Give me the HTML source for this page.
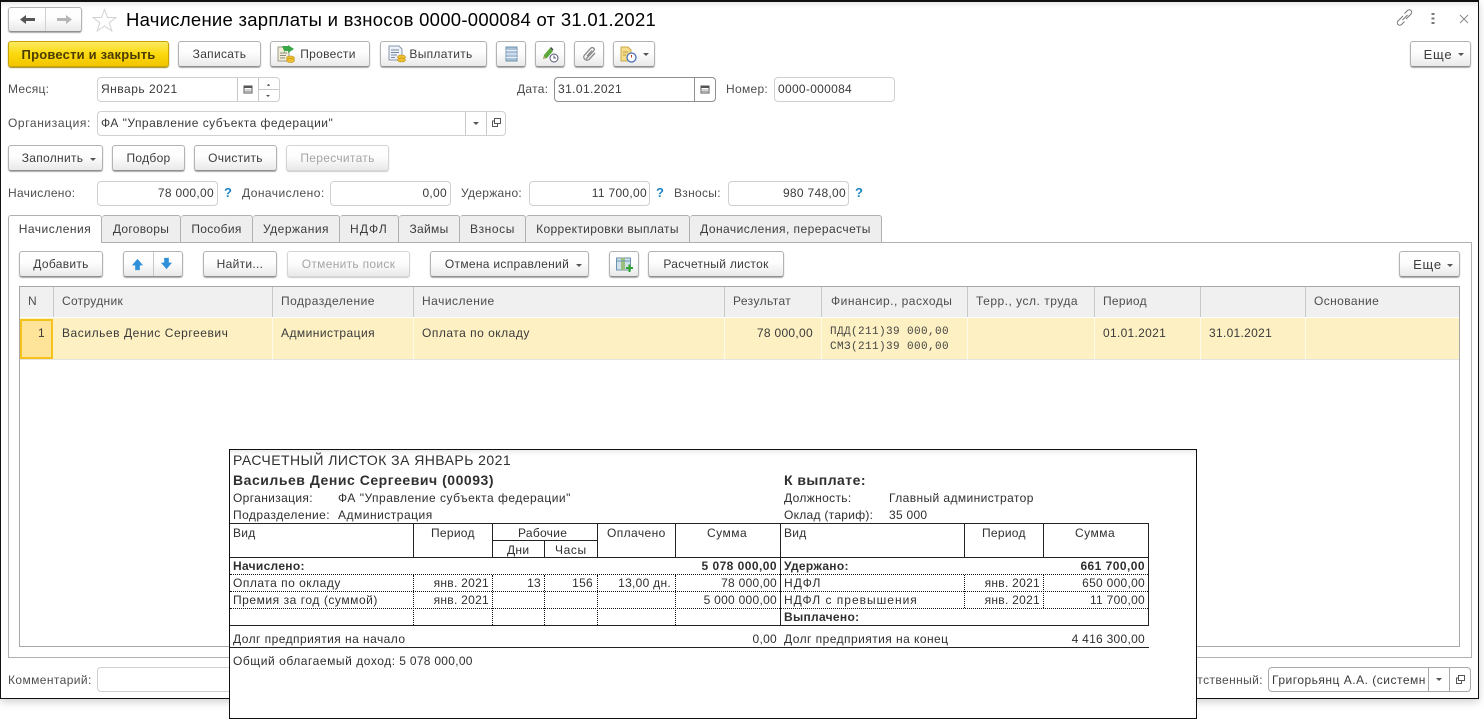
<!DOCTYPE html>
<html lang="ru"><head><meta charset="utf-8"><title>Начисление зарплаты</title>
<style>
html,body{margin:0;padding:0;background:#fff;width:1484px;height:719px;overflow:hidden}
body{position:relative;font-family:"Liberation Sans",Arial,sans-serif;font-size:12px;color:#3a3a3a}
div,svg{position:absolute;box-sizing:border-box}
.t{white-space:nowrap;line-height:16px;height:16px;letter-spacing:.3px}
.cy{letter-spacing:.5px}
.l{color:#4d4d4d}
.b{height:26px;border:1px solid #b3b3b3;border-bottom-color:#8f8f8f;border-radius:3px;background:linear-gradient(#fff,#fdfdfd 45%,#e9e9e9);box-shadow:0 1px 1px #aaa;display:flex;align-items:center;justify-content:center;white-space:nowrap;letter-spacing:.3px;color:#3c3c3c}
.b.d{color:#a5a5a5;border-color:#d5d5d5;box-shadow:0 1px 1px #ccc}
.f{height:25px;border:1px solid #d0d0d0;border-radius:4px;background:#fff}
.v{width:1px;background:#b5b5b5}
.tab{top:215px;height:27px;border:1px solid #b0b0b0;border-bottom:0;border-left:0;background:#eee;border-radius:3px 3px 0 0;text-align:center;line-height:26px;letter-spacing:.3px;color:#3c3c3c;white-space:nowrap}
.c{width:1px;top:287px;height:30px;background:#c8c8c8}
.y{width:1px;top:318px;height:41px;background:#fffbe9}
.h{color:#4d4d4d}
.m{font-family:"Liberation Mono",monospace;font-size:11px;letter-spacing:.4px;line-height:14px;height:14px;white-space:nowrap;color:#444}
.r .t{letter-spacing:.28px;color:#2f2f2f}
.r .t.cy{letter-spacing:.5px}
.r .bd{font-weight:bold;letter-spacing:.3px}
.ln{background:#222}
.dh{height:0;border-top:1px dotted #111}
.dv{width:0;border-left:1px dotted #111}
.ca{border-left:3px solid transparent;border-right:3px solid transparent;border-top:3px solid #555;width:0;height:0}
.eq{font-size:13px;letter-spacing:.8px}
</style></head><body>

<!-- window -->
<div style="left:0;top:0;width:1479px;height:699px;border:1px solid #111;border-width:2px 1px 1px 1px;background:#fff;box-shadow:0 3px 8px rgba(0,0,0,.18)"></div>
<div style="left:1px;top:2px;width:1477px;height:6px;background:linear-gradient(#ececec,#fff)"></div>

<!-- nav -->
<div class="b" style="left:8px;top:7px;width:74px;height:25px"></div>
<div class="v" style="left:45px;top:8px;height:23px;background:#d0d0d0"></div>
<svg style="left:20px;top:14px" width="16" height="11" viewBox="0 0 16 11"><path d="M0 5.500L6 1v3h9v3H6v3z" fill="#555"/></svg>
<svg style="left:56px;top:14px" width="16" height="11" viewBox="0 0 16 11"><path d="M16 5.500L10 1v3H1v3h9v3z" fill="#b5b5b5"/></svg>
<svg style="left:92px;top:8px" width="25" height="24" viewBox="0 0 25 24"><path d="M12.500 1.500l3 8h8.500l-6.800 5.200 2.600 8.300-7.300-5-7.300 5 2.600-8.300L1 9.500h8.500z" fill="#fff" stroke="#d2d2d2"/></svg>
<div class="t" style="left:126px;top:9px;font-size:18.5px;line-height:22px;height:22px;color:#000;letter-spacing:.27px">Начисление зарплаты и взносов 0000-000084 от 31.01.2021</div>

<svg style="left:1395px;top:9px" width="20" height="18" viewBox="0 0 20 18"><path d="M8 7l-5 5a2.400 2.400 0 0 0 3.500 3.500l3-3M11 10l5-5a2.400 2.400 0 0 0-3.500-3.500l-3 3M7.500 11l5-5" fill="none" stroke="#777"/></svg>
<svg style="left:1431px;top:12px" width="4" height="13" viewBox="0 0 4 13"><path d="M.5 1h3v2h-3zM.5 5.500h3v2h-3zM.5 10h3v2h-3z" fill="#777"/></svg>
<svg style="left:1459px;top:14px" width="11" height="10" viewBox="0 0 11 10"><path d="M1 1l8 8M9 1l-8 8" stroke="#888" fill="none"/></svg>

<!-- toolbar -->
<div class="b" style="left:8px;top:41px;width:161px;background:linear-gradient(#fdea63,#fbd90c 50%,#f2c500);border-color:#c7a400;color:#4b3d00;font-weight:bold;font-size:13px;letter-spacing:.2px;box-shadow:0 1px 1px #a08a20">Провести и закрыть</div>
<div class="b" style="left:178px;top:41px;width:83px">Записать</div>
<div class="b" style="left:270px;top:41px;width:100px;padding-left:16px">Провести</div>
<svg style="left:277px;top:45px" width="19" height="18" viewBox="0 0 19 18"><path d="M1 2h11v14H1z" fill="#f1edd8" stroke="#9a9a8a"/><path d="M3 8h7M3 10.500h6M3 13h5" stroke="#8a8a7a"/><path d="M5 1h6V0l6 4-6 4V6H8v2z" fill="#3aa84a"/><ellipse cx="13.500" cy="13" rx="4" ry="2" fill="#eec030" stroke="#b88a10" stroke-width=".6"/><ellipse cx="13.500" cy="15.500" rx="4" ry="2" fill="#eec030" stroke="#b88a10" stroke-width=".6"/></svg>
<div class="b" style="left:380px;top:41px;width:107px;padding-left:15px">Выплатить</div>
<svg style="left:388px;top:45px" width="19" height="18" viewBox="0 0 19 18"><path d="M1 1h10l3 3v11H1z" fill="#eef2fa" stroke="#8a98b0"/><path d="M3 5h8M3 7.500h8M3 10h6M3 12.500h4" stroke="#7a88a0"/><ellipse cx="13.500" cy="12" rx="4" ry="2" fill="#eec030" stroke="#b88a10" stroke-width=".6"/><ellipse cx="13.500" cy="15" rx="4" ry="2" fill="#eec030" stroke="#b88a10" stroke-width=".6"/></svg>
<div class="b" style="left:496px;top:41px;width:30px"></div>
<svg style="left:505px;top:46px" width="13" height="16" viewBox="0 0 13 16"><path d="M1 1h11v14H1z" fill="#a9c2d8" stroke="#6f93ad"/><path d="M1 4.500h11M1 8h11M1 11.500h11" stroke="#eef"/></svg>
<div class="b" style="left:535px;top:41px;width:30px"></div>
<svg style="left:542px;top:46px" width="17" height="17" viewBox="0 0 17 17"><path d="M1 13l1-4 6-7 3 3-6 7z" fill="#5aa83a"/><path d="M1 13l1-3 2 2z" fill="#c9a06a"/><path d="M8 2l1-1 2.500 2.500-1 1z" fill="#444"/><circle cx="12" cy="12" r="4" fill="#fff" stroke="#557"/><path d="M12 9.500V12h2" stroke="#557" fill="none"/></svg>
<div class="b" style="left:574px;top:41px;width:30px"></div>
<svg style="left:582px;top:46px" width="15" height="16" viewBox="0 0 15 16"><path d="M4 13L12 4.500a2 2 0 0 0-3-2.500L2.500 9a3.200 3.200 0 0 0 4.500 4.500L13 7M5 10l5-5.500" fill="none" stroke="#888" stroke-width="1.300"/></svg>
<div class="b" style="left:613px;top:41px;width:42px"></div>
<svg style="left:620px;top:46px" width="17" height="17" viewBox="0 0 17 17"><path d="M1 1h7l3 3v11H1z" fill="#f5dc8a" stroke="#c9a94a"/><path d="M3 6h5M3 9h3" stroke="#b99a3a"/><circle cx="11.500" cy="11.500" r="4.500" fill="#fff" stroke="#4a6fb5" stroke-width="1.300"/><path d="M11.500 9v2.500" stroke="#c33"/></svg>
<div class="ca" style="left:643px;top:53px"></div>
<div class="b eq" style="left:1410px;top:41px;width:61px;padding-right:5px">Еще</div>
<div class="ca" style="left:1458px;top:53px"></div>

<!-- fields row 1 -->
<div class="t l" style="left:8px;top:81px">Месяц:</div>
<div class="f" style="left:97px;top:77px;width:183px"></div>
<div class="v" style="left:237px;top:78px;height:23px;background:#c8c8c8"></div>
<div class="v" style="left:258px;top:78px;height:23px;background:#c8c8c8"></div>
<div style="left:259px;top:89px;width:20px;height:1px;background:#c8c8c8"></div>
<div class="t" style="left:101px;top:81px;letter-spacing:.5px">Январь 2021</div>
<svg style="left:243px;top:84px" width="10" height="10" viewBox="0 0 10 10"><path d="M1 2h8v7H1z" fill="#fff" stroke="#555"/><path d="M1 1.500h8V4H1z" fill="#555"/><path d="M2.500 5.500h1v1h-1zM4.500 5.500h1v1h-1zM6.500 5.500h1v1h-1zM2.500 7h1v1h-1zM4.500 7h1v1h-1zM6.500 7h1v1h-1z" fill="#555"/></svg>
<div style="left:267px;top:84px;width:3px;height:2px;border-bottom:2px solid #666;border-left:1px solid transparent;border-right:1px solid transparent"></div>
<div class="ca" style="left:266px;top:95px;border-left-width:2px;border-right-width:2px;border-top-width:2px"></div>

<div class="t l" style="left:517px;top:81px">Дата:</div>
<div class="f" style="left:554px;top:77px;width:162px;border-color:#8f8f8f"></div>
<div class="v" style="left:694px;top:78px;height:23px;background:#8f8f8f"></div>
<div class="t" style="left:558px;top:81px;letter-spacing:.4px">31.01.2021</div>
<svg style="left:700px;top:84px" width="10" height="10" viewBox="0 0 10 10"><path d="M1 2h8v7H1z" fill="#fff" stroke="#555"/><path d="M1 1.500h8V4H1z" fill="#555"/><path d="M2.500 5.500h1v1h-1zM4.500 5.500h1v1h-1zM6.500 5.500h1v1h-1zM2.500 7h1v1h-1zM4.500 7h1v1h-1zM6.500 7h1v1h-1z" fill="#555"/></svg>
<div class="t l" style="left:726px;top:81px">Номер:</div>
<div class="f" style="left:774px;top:77px;width:121px"></div>
<div class="t" style="left:778px;top:81px">0000-000084</div>

<!-- org -->
<div class="t l" style="left:8px;top:115px;letter-spacing:.6px">Организация:</div>
<div class="f" style="left:97px;top:111px;width:409px"></div>
<div class="v" style="left:465px;top:112px;height:23px;background:#c8c8c8"></div>
<div class="v" style="left:486px;top:112px;height:23px;background:#c8c8c8"></div>
<div class="t" style="left:101px;top:115px;letter-spacing:.48px">ФА "Управление субъекта федерации"</div>
<div class="ca" style="left:473px;top:122px"></div>
<svg style="left:491px;top:117px" width="11" height="11" viewBox="0 0 11 11"><path d="M3.500 1.500h6v5h-6zM3.500 4H1.500v5.500h5v-3" fill="none" stroke="#555"/></svg>

<!-- buttons row 2 -->
<div class="b" style="left:8px;top:145px;width:95px;padding-right:6px">Заполнить</div>
<div class="ca" style="left:90px;top:158px"></div>
<div class="b" style="left:112px;top:145px;width:73px">Подбор</div>
<div class="b" style="left:194px;top:145px;width:83px">Очистить</div>
<div class="b d" style="left:286px;top:145px;width:103px">Пересчитать</div>

<!-- sums -->
<div class="t l" style="left:8px;top:185px">Начислено:</div>
<div class="f" style="left:97px;top:181px;width:121px"></div>
<div class="t" style="right:1270px;top:185px">78 000,00</div>
<div class="t" style="left:224px;top:185px;color:#1f84c6;font-weight:bold;font-size:13px">?</div>
<div class="t l" style="left:242px;top:185px;letter-spacing:.45px">Доначислено:</div>
<div class="f" style="left:330px;top:181px;width:121px"></div>
<div class="t" style="right:1037px;top:185px">0,00</div>
<div class="t l" style="left:461px;top:185px">Удержано:</div>
<div class="f" style="left:529px;top:181px;width:121px"></div>
<div class="t" style="right:837px;top:185px">11 700,00</div>
<div class="t" style="left:656px;top:185px;color:#1f84c6;font-weight:bold;font-size:13px">?</div>
<div class="t l" style="left:674px;top:185px">Взносы:</div>
<div class="f" style="left:728px;top:181px;width:121px"></div>
<div class="t" style="right:638px;top:185px">980 748,00</div>
<div class="t" style="left:855px;top:185px;color:#1f84c6;font-weight:bold;font-size:13px">?</div>

<!-- tabs panel -->
<div style="left:8px;top:242px;width:1464px;height:416px;border:1px solid #b0b0b0;background:#fff"></div>
<div class="tab" style="left:8px;width:94px;background:#fff;border-left:1px solid #b0b0b0;height:28px;z-index:2;letter-spacing:.5px">Начисления</div>
<div class="tab" style="left:102px;width:79px">Договоры</div>
<div class="tab" style="left:181px;width:72px">Пособия</div>
<div class="tab" style="left:253px;width:87px;letter-spacing:.5px">Удержания</div>
<div class="tab" style="left:340px;width:59px;letter-spacing:1.2px">НДФЛ</div>
<div class="tab" style="left:399px;width:61px">Займы</div>
<div class="tab" style="left:460px;width:66px;letter-spacing:.6px">Взносы</div>
<div class="tab" style="left:526px;width:164px;letter-spacing:.35px">Корректировки выплаты</div>
<div class="tab" style="left:690px;width:192px;letter-spacing:.45px">Доначисления, перерасчеты</div>

<!-- panel buttons -->
<div class="b" style="left:19px;top:251px;width:84px">Добавить</div>
<div class="b" style="left:123px;top:251px;width:60px"></div>
<div class="v" style="left:153px;top:252px;height:24px;background:#c8c8c8"></div>
<svg style="left:131px;top:258px" width="13" height="13" viewBox="0 0 14 14"><path d="M7 1l6 7H9.500v5h-5V8H1z" fill="#2f8fd8"/></svg>
<svg style="left:160px;top:257px" width="13" height="13" viewBox="0 0 14 14"><path d="M7 13l6-7H9.500V1h-5v5H1z" fill="#2f8fd8"/></svg>
<div class="b" style="left:203px;top:251px;width:74px">Найти...</div>
<div class="b d" style="left:287px;top:251px;width:123px">Отменить поиск</div>
<div class="b" style="left:430px;top:251px;width:159px;padding-right:5px">Отмена исправлений</div>
<div class="ca" style="left:576px;top:264px"></div>
<div class="b" style="left:609px;top:251px;width:30px"></div>
<svg style="left:616px;top:257px" width="17" height="16" viewBox="0 0 17 16"><path d="M0.500 1h14v12H.5z" fill="#cfe0ea" stroke="#6a93ad"/><path d="M5 1h4v12H5z" fill="#9cc07c"/><path d="M1 4h13" stroke="#6a93ad"/><path d="M10 10h2.500V7.500h2V10H17v2h-2.500v3h-2v-3H10z" fill="#2fa52f"/></svg>
<div class="b" style="left:648px;top:251px;width:136px">Расчетный листок</div>
<div class="b eq" style="left:1399px;top:251px;width:61px;padding-right:4px">Еще</div>
<div class="ca" style="left:1447px;top:264px"></div>

<!-- table -->
<div style="left:19px;top:286px;width:1441px;height:361px;border:1px solid #a8a8a8;background:#fff"></div>
<div style="left:20px;top:287px;width:1439px;height:30px;background:#f0f0f0"></div>
<div style="left:20px;top:318px;width:1439px;height:41px;background:#fdf0c2"></div>
<div style="left:20px;top:359px;width:1439px;height:1px;background:#e4e4e4"></div>
<div style="left:20px;top:319px;width:33px;height:40px;background:#fde498;border:2px solid #f5c21b"></div>
<div class="c" style="left:53px"></div><div class="c" style="left:272px"></div><div class="c" style="left:413px"></div><div class="c" style="left:724px"></div><div class="c" style="left:821px"></div><div class="c" style="left:967px"></div><div class="c" style="left:1094px"></div><div class="c" style="left:1200px"></div><div class="c" style="left:1305px"></div>
<div class="y" style="left:272px"></div><div class="y" style="left:413px"></div><div class="y" style="left:724px"></div><div class="y" style="left:821px"></div><div class="y" style="left:967px"></div><div class="y" style="left:1094px"></div><div class="y" style="left:1200px"></div><div class="y" style="left:1305px"></div>
<div class="t h" style="left:28px;top:293px">N</div>
<div class="t h" style="left:62px;top:293px">Сотрудник</div>
<div class="t h cy" style="left:281px;top:293px">Подразделение</div>
<div class="t h cy" style="left:422px;top:293px">Начисление</div>
<div class="t h" style="left:733px;top:293px;letter-spacing:.4px">Результат</div>
<div class="t h cy" style="left:831px;top:293px">Финансир., расходы</div>
<div class="t h cy" style="left:976px;top:293px">Терр., усл. труда</div>
<div class="t h" style="left:1103px;top:293px">Период</div>
<div class="t h" style="left:1314px;top:293px;letter-spacing:.4px">Основание</div>
<div class="t" style="left:38px;top:325px">1</div>
<div class="t" style="left:62px;top:325px;letter-spacing:.55px">Васильев Денис Сергеевич</div>
<div class="t" style="left:281px;top:325px;letter-spacing:.45px">Администрация</div>
<div class="t cy" style="left:422px;top:325px">Оплата по окладу</div>
<div class="t" style="right:671px;top:325px">78 000,00</div>
<div class="m" style="left:830px;top:325px">ПДД(211)39 000,00</div>
<div class="m" style="left:830px;top:340px">СМЗ(211)39 000,00</div>
<div class="t" style="left:1103px;top:325px">01.01.2021</div>
<div class="t" style="left:1209px;top:325px">31.01.2021</div>

<!-- bottom -->
<div class="t l" style="left:8px;top:672px;letter-spacing:.4px">Комментарий:</div>
<div class="f" style="left:97px;top:667px;width:140px"></div>
<div class="t l" style="right:221px;top:672px;letter-spacing:.4px">Ответственный:</div>
<div class="f" style="left:1268px;top:667px;width:203px;border-color:#a8a8a8"></div>
<div class="v" style="left:1428px;top:668px;height:23px;background:#a8a8a8"></div>
<div class="v" style="left:1449px;top:668px;height:23px;background:#a8a8a8"></div>
<div class="t" style="left:1272px;top:672px;width:154px;overflow:hidden;letter-spacing:.5px">Григорьянц А.А. (системн</div>
<div class="ca" style="left:1436px;top:678px"></div>
<svg style="left:1455px;top:674px" width="11" height="11" viewBox="0 0 11 11"><path d="M3.500 1.500h6v5h-6zM3.500 4H1.500v5.500h5v-3" fill="none" stroke="#555"/></svg>

<!-- report overlay -->
<div class="r" style="left:0;top:0;width:1484px;height:719px">
<div style="left:229px;top:449px;width:968px;height:270px;border:1px solid #111;background:#fff"></div>
<div style="left:230px;top:450px;width:966px;height:6px;background:linear-gradient(#eee,#fff)"></div>
<div class="t" style="left:233px;top:452px;font-size:14px;letter-spacing:.45px">РАСЧЕТНЫЙ ЛИСТОК ЗА ЯНВАРЬ 2021</div>
<div class="t bd" style="left:233px;top:472px;font-size:14px;letter-spacing:.53px">Васильев Денис Сергеевич (00093)</div>
<div class="t bd" style="left:784px;top:472px;font-size:14px;letter-spacing:.45px">К выплате:</div>
<div class="t" style="left:233px;top:490px;letter-spacing:.35px">Организация:</div>
<div class="t cy" style="left:338px;top:490px">ФА "Управление субъекта федерации"</div>
<div class="t" style="left:233px;top:507px;letter-spacing:.45px">Подразделение:</div>
<div class="t cy" style="left:338px;top:507px">Администрация</div>
<div class="t" style="left:784px;top:490px;letter-spacing:.35px">Должность:</div>
<div class="t" style="left:889px;top:490px;letter-spacing:.4px">Главный администратор</div>
<div class="t" style="left:784px;top:507px">Оклад (тариф):</div>
<div class="t" style="left:889px;top:507px">35 000</div>

<div class="ln" style="left:230px;top:523px;width:919px;height:1px"></div>
<div class="ln" style="left:230px;top:557px;width:919px;height:1px"></div>
<div class="ln" style="left:492px;top:540px;width:105px;height:1px"></div>
<div class="ln" style="left:230px;top:625px;width:919px;height:1px"></div>
<div class="ln" style="left:230px;top:647px;width:919px;height:1px"></div>
<div class="dh" style="left:230px;top:574px;width:918px"></div>
<div class="dh" style="left:230px;top:591px;width:918px"></div>
<div class="dh" style="left:230px;top:608px;width:918px"></div>

<div class="ln" style="left:413px;top:523px;width:1px;height:34px"></div>
<div class="ln" style="left:492px;top:523px;width:1px;height:34px"></div>
<div class="ln" style="left:544px;top:540px;width:1px;height:17px"></div>
<div class="ln" style="left:597px;top:523px;width:1px;height:34px"></div>
<div class="ln" style="left:675px;top:523px;width:1px;height:34px"></div>
<div class="ln" style="left:780px;top:523px;width:1px;height:102px"></div>
<div class="ln" style="left:964px;top:523px;width:1px;height:34px"></div>
<div class="ln" style="left:1043px;top:523px;width:1px;height:34px"></div>
<div class="ln" style="left:1148px;top:523px;width:1px;height:102px"></div>

<div class="dv" style="left:413px;top:575px;height:50px"></div>
<div class="dv" style="left:492px;top:575px;height:50px"></div>
<div class="dv" style="left:544px;top:575px;height:50px"></div>
<div class="dv" style="left:597px;top:575px;height:50px"></div>
<div class="dv" style="left:675px;top:575px;height:50px"></div>
<div class="dv" style="left:964px;top:575px;height:33px"></div>
<div class="dv" style="left:1043px;top:575px;height:33px"></div>

<div class="t" style="left:233px;top:525px">Вид</div>
<div class="t" style="left:431px;top:525px">Период</div>
<div class="t" style="left:518px;top:525px">Рабочие</div>
<div class="t" style="left:507px;top:542px">Дни</div>
<div class="t" style="left:555px;top:542px;letter-spacing:.6px">Часы</div>
<div class="t" style="left:607px;top:525px;letter-spacing:.4px">Оплачено</div>
<div class="t cy" style="left:707px;top:525px">Сумма</div>
<div class="t" style="left:784px;top:525px">Вид</div>
<div class="t" style="left:982px;top:525px">Период</div>
<div class="t cy" style="left:1075px;top:525px">Сумма</div>

<div class="t bd" style="left:233px;top:558px">Начислено:</div>
<div class="t bd" style="right:707px;top:558px;letter-spacing:.45px">5 078 000,00</div>
<div class="t bd" style="left:784px;top:558px">Удержано:</div>
<div class="t bd" style="right:339px;top:558px;letter-spacing:.45px">661 700,00</div>

<div class="t cy" style="left:233px;top:575px">Оплата по окладу</div>
<div class="t" style="right:995px;top:575px">янв. 2021</div>
<div class="t" style="right:943px;top:575px">13</div>
<div class="t" style="right:891px;top:575px">156</div>
<div class="t" style="right:813px;top:575px">13,00 дн.</div>
<div class="t" style="right:707px;top:575px">78 000,00</div>
<div class="t" style="left:784px;top:575px;letter-spacing:1.1px">НДФЛ</div>
<div class="t" style="right:444px;top:575px">янв. 2021</div>
<div class="t" style="right:339px;top:575px">650 000,00</div>

<div class="t" style="left:233px;top:592px;letter-spacing:.55px">Премия за год (суммой)</div>
<div class="t" style="right:995px;top:592px">янв. 2021</div>
<div class="t" style="right:707px;top:592px">5 000 000,00</div>
<div class="t" style="left:784px;top:592px;letter-spacing:1px">НДФЛ с превышения</div>
<div class="t" style="right:444px;top:592px">янв. 2021</div>
<div class="t" style="right:339px;top:592px">11 700,00</div>

<div class="t bd" style="left:784px;top:609px">Выплачено:</div>

<div class="t" style="left:233px;top:631px;letter-spacing:.45px">Долг предприятия на начало</div>
<div class="t" style="right:707px;top:631px">0,00</div>
<div class="t" style="left:784px;top:631px;letter-spacing:.45px">Долг предприятия на конец</div>
<div class="t" style="right:339px;top:631px">4 416 300,00</div>
<div class="t" style="left:233px;top:653px"><span style="letter-spacing:.55px">Общий облагаемый доход:</span> 5 078 000,00</div>
</div>
</body></html>
